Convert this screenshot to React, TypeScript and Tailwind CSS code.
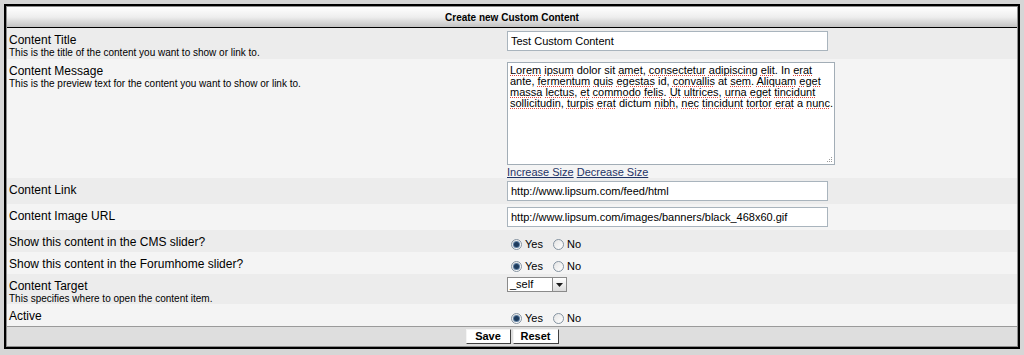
import React from "react";

const FONT = "font-['Liberation_Sans',Arial,sans-serif]";

// words with a red spell-check squiggle under them
const typos = new Set([
  "Lorem", "ipsum", "amet", "consectetur", "adipiscing", "elit", "erat",
  "fermentum", "quis", "egestas", "convallis", "sem", "Aliquam", "eget",
  "massa", "lectus", "et", "commodo", "felis", "Ut", "ultrices", "urna",
  "tincidunt", "sollicitudin", "turpis", "nibh", "nec", "tortor", "nunc",
]);

const lines = [
  "Lorem ipsum dolor sit amet, consectetur adipiscing elit. In erat",
  "ante, fermentum quis egestas id, convallis at sem. Aliquam eget",
  "massa lectus, et commodo felis. Ut ultrices, urna eget tincidunt",
  "sollicitudin, turpis erat dictum nibh, nec tincidunt tortor erat a nunc.",
];

const Line = ({ text }: { text: string }) => {
  const parts = text.split(/(\s+|[.,])/).filter((p) => p !== "");
  return (
    <div className="whitespace-pre leading-[11px] h-[11px]">
      {parts.map((p, i) =>
        typos.has(p) ? (
          <span key={i} className="underline decoration-dotted decoration-[#e0463c] decoration-1 underline-offset-[1px]">
            {p}
          </span>
        ) : (
          <span key={i}>{p}</span>
        )
      )}
    </div>
  );
};

const Radio = ({ checked }: { checked?: boolean }) => (
  <span className="w-[11px] h-[11px] rounded-full border border-[#8593a1] bg-gradient-to-br from-[#e4e4e4] to-white flex items-center justify-center shrink-0">
    {checked && <span className="w-[5px] h-[5px] rounded-full bg-[#1e3b5c] ring-1 ring-[#5d7fa3]" />}
  </span>
);

const YesNo = () => (
  <div className="flex items-center text-[11px] text-black gap-[3px] pl-[4px]">
    <Radio checked />
    <span className="mr-[7px]">Yes</span>
    <Radio />
    <span>No</span>
  </div>
);

const TextInput = ({ value }: { value: string }) => (
  <div className="w-[321px] h-[20px] bg-white border border-[#a9b4bd] px-[3px] flex items-center text-[11px] text-black whitespace-nowrap">
    {value}
  </div>
);

type RowProps = {
  label: string;
  desc?: string;
  bg: string;
  h: string;
  children: React.ReactNode;
  align?: string;
};

const Row = ({ label, desc, bg, h, children, align = "items-start pt-[3px]" }: RowProps) => (
  <div className={`flex ${bg} ${h}`}>
    <div className="w-[500px] shrink-0 pl-[2px] pt-[5px]">
      <div className="text-[12px] leading-[14px] text-black">{label}</div>
      {desc && <div className="text-[10px] leading-[11px] text-black">{desc}</div>}
    </div>
    <div className={`flex-1 flex ${align}`}>{children}</div>
  </div>
);

export default function App() {
  return (
    <div className={`${FONT} w-[1024px] h-[355px] bg-[#d6d6d6] pt-[4px] px-[4px]`}>
      <div className="border-2 border-black">
        <div className="border border-[#8e8e8e] bg-[#ededed]">
          {/* header */}
          <div className="h-[21px] border-b border-black bg-gradient-to-b from-white via-[#eeeeee] to-[#c3c3c3] flex items-center justify-center">
            <span className="text-[10px] font-bold text-black">Create new Custom Content</span>
          </div>

          <Row label="Content Title" desc="This is the title of the content you want to show or link to." bg="bg-[#ececec]" h="h-[31px]">
            <TextInput value="Test Custom Content" />
          </Row>

          <Row label="Content Message" desc="This is the preview text for the content you want to show or link to." bg="bg-[#f4f4f4]" h="h-[119px]">
            <div className="flex flex-col">
              <div className="relative w-[328px] h-[103px] bg-white border border-[#a2adb6] px-[2px] pt-[2px] text-[11px] text-black">
                {lines.map((l, i) => (
                  <Line key={i} text={l} />
                ))}
                <svg className="absolute right-[1px] bottom-[1px]" width="8" height="8" viewBox="0 0 8 8">
                  <rect x="6" y="2" width="1" height="1" fill="#9a9a9a" />
                  <rect x="4" y="4" width="1" height="1" fill="#9a9a9a" />
                  <rect x="6" y="4" width="1" height="1" fill="#9a9a9a" />
                  <rect x="2" y="6" width="1" height="1" fill="#9a9a9a" />
                  <rect x="4" y="6" width="1" height="1" fill="#9a9a9a" />
                  <rect x="6" y="6" width="1" height="1" fill="#9a9a9a" />
                </svg>
              </div>
              <div className="text-[11px] leading-[13px] mt-[1px] text-[#1f3366]">
                <span className="underline">Increase Size</span> <span className="underline">Decrease Size</span>
              </div>
            </div>
          </Row>

          <Row label="Content Link" bg="bg-[#ececec]" h="h-[26px]">
            <TextInput value="http://www.lipsum.com/feed/html" />
          </Row>

          <Row label="Content Image URL" bg="bg-[#f4f4f4]" h="h-[26px]">
            <TextInput value="http://www.lipsum.com/images/banners/black_468x60.gif" />
          </Row>

          <Row label="Show this content in the CMS slider?" bg="bg-[#ececec]" h="h-[22px]" align="items-center pt-[6px]">
            <YesNo />
          </Row>

          <Row label="Show this content in the Forumhome slider?" bg="bg-[#f4f4f4]" h="h-[22px]" align="items-center pt-[6px]">
            <YesNo />
          </Row>

          <Row label="Content Target" desc="This specifies where to open the content item." bg="bg-[#ececec]" h="h-[30px]">
            <div className="flex h-[15px] w-[60px] bg-white border border-[#8a8a8a] text-[11px] text-black">
              <span className="flex-1 pl-[2px] leading-[13px]">_self</span>
              <span className="w-[14px] h-[13px] border-l border-[#8a8a8a] bg-gradient-to-b from-white to-[#dcdcdc] flex items-center justify-center">
                <svg width="7" height="4" viewBox="0 0 7 4">
                  <path d="M0 0 H7 L3.5 4 Z" fill="#1a1a1a" />
                </svg>
              </span>
            </div>
          </Row>

          <Row label="Active" bg="bg-[#f4f4f4]" h="h-[22px]" align="items-center pt-[6px]">
            <YesNo />
          </Row>

          {/* footer */}
          <div className="h-[20px] border-t border-[#9a9a9a] bg-[#dedede] flex items-center justify-center gap-[2px]">
            <button className="w-[45px] h-[15px] bg-white border border-t-[#f4f4f4] border-l-[#f4f4f4] border-r-[#404040] border-b-[#404040] text-[11px] font-bold text-black leading-[13px]">
              Save
            </button>
            <button className="w-[46px] h-[15px] bg-white border border-t-[#f4f4f4] border-l-[#f4f4f4] border-r-[#404040] border-b-[#404040] text-[11px] font-bold text-black leading-[13px]">
              Reset
            </button>
          </div>
        </div>
      </div>
    </div>
  );
}
